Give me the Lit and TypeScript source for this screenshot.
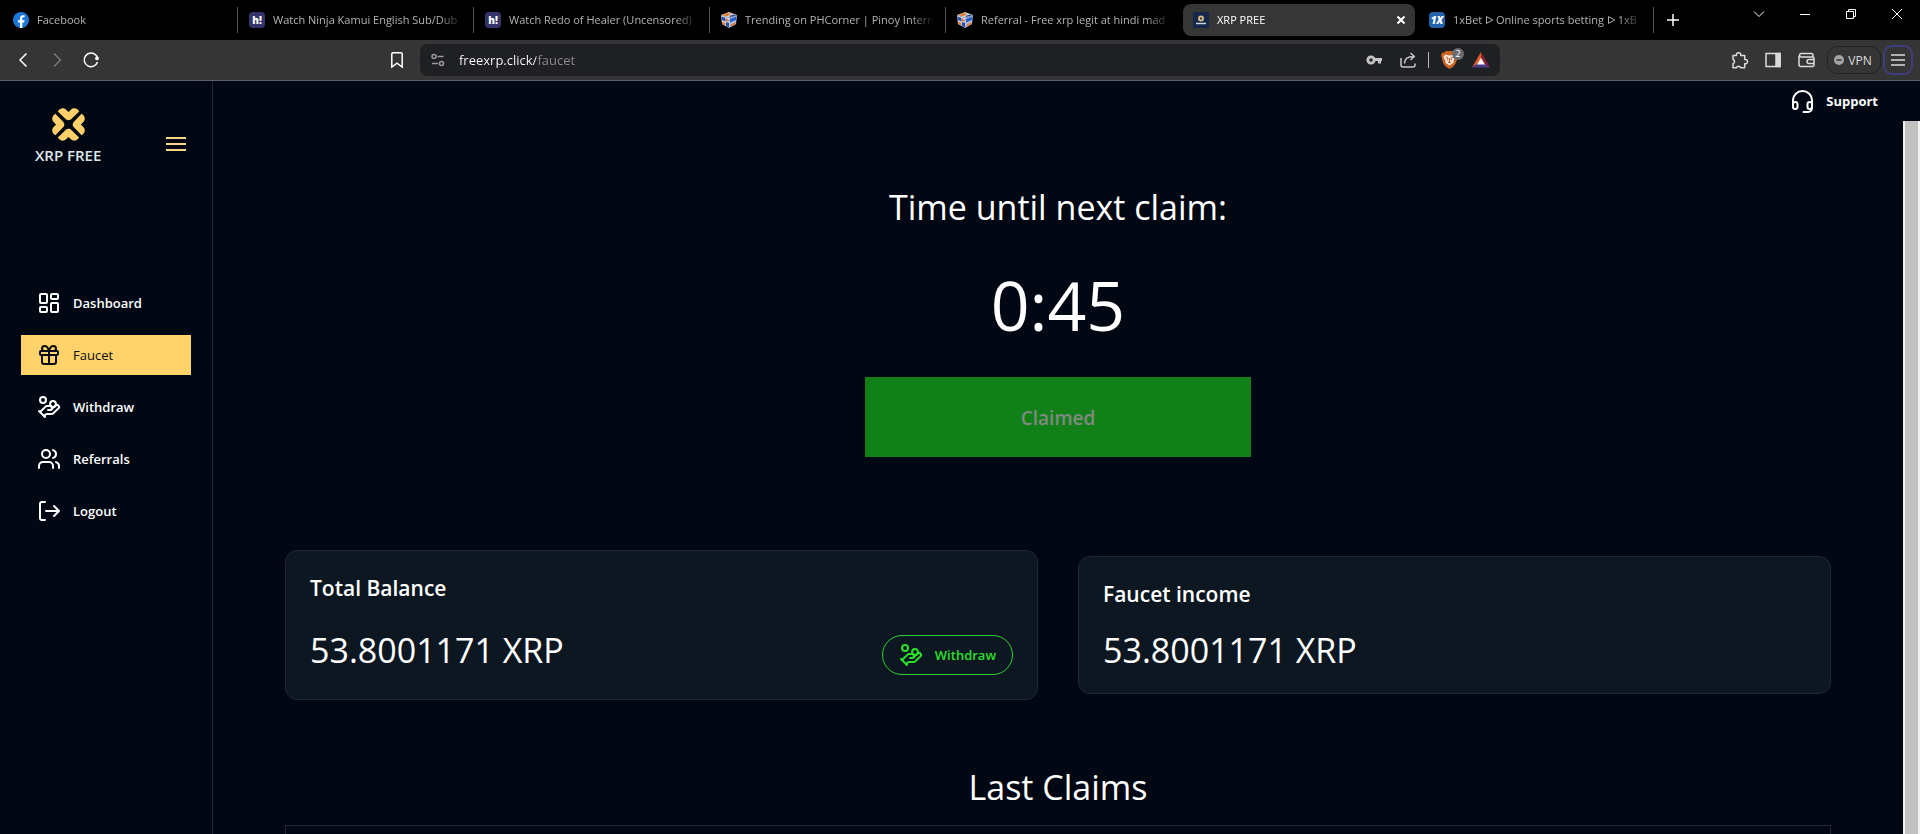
import { LitElement, html, css, svg, nothing, type TemplateResult } from "lit";
import { customElement, property } from "lit/decorators.js";
import { classMap } from "lit/directives/class-map.js";

const icons: Record<string, TemplateResult> = {
  dashboard: svg`<rect width="7" height="9" x="3" y="3" rx="1"/><rect width="7" height="5" x="14" y="3" rx="1"/><rect width="7" height="9" x="14" y="12" rx="1"/><rect width="7" height="5" x="3" y="16" rx="1"/>`,
  gift: svg`<rect x="3" y="8" width="18" height="4" rx="1"/><path d="M12 8v13M19 12v7a2 2 0 0 1-2 2H7a2 2 0 0 1-2-2v-7"/><path d="M7.5 8a2.5 2.5 0 0 1 0-5A4.8 8 0 0 1 12 8a4.8 8 0 0 1 4.5-5 2.5 2.5 0 0 1 0 5"/>`,
  coins: svg`<path d="M11 15h2a2 2 0 1 0 0-4h-3c-.6 0-1.1.2-1.4.6L3 17"/><path d="m7 21 1.6-1.4c.3-.4.8-.6 1.4-.6h4c1.1 0 2.1-.4 2.8-1.2l4.6-4.4a2 2 0 0 0-2.75-2.91l-4.2 3.9"/><path d="m2 16 6 6"/><circle cx="16" cy="9" r="2.9"/><circle cx="6" cy="5" r="3"/>`,
  users: svg`<path d="M16 21v-2a4 4 0 0 0-4-4H6a4 4 0 0 0-4 4v2"/><circle cx="9" cy="7" r="4"/><path d="M22 21v-2a4 4 0 0 0-3-3.87M16 3.13a4 4 0 0 1 0 7.75"/>`,
  logout: svg`<path d="M8 3H5a2 2 0 0 0-2 2v14a2 2 0 0 0 2 2h3M17 17l5-5-5-5M22 12H9"/>`,
  headset: svg`<path d="M3 17v-6a9 8.5 0 0 1 19 0v6"/><rect x="3" y="13" width="4.5" height="7" rx="2.2"/><rect x="17.500" y="13" width="4.500" height="7" rx="2.2"/><path d="M22 17v2a4 4 0 0 1-4 4h-4.500"/>`,
};

@customElement("line-icon")
class LineIcon extends LitElement {
  @property() name = "";
  static styles = css`
    :host { display: inline-flex; flex: none; }
    svg { width: 24px; height: 24px; overflow: visible; fill: none; stroke: currentColor; stroke-width: 2; stroke-linecap: round; stroke-linejoin: round; }
  `;
  render() {
    return html`<svg viewBox="0 0 24 24" aria-hidden="true">${icons[this.name]}</svg>`;
  }
}

const cube = html`<svg class="fav" viewBox="0 0 16 16" aria-hidden="true">
  <path d="M0 3 8 0l8 3-8 3z" fill="#d8d2cc"/><path d="M0 3l8 3v10l-7-4z" fill="#cfd6e6"/><path d="M16 3 8 6v10l7-4z" fill="#a9bfe8"/>
  <path d="M1.500 3.200 6 1l4 .8-4 2.400z" fill="#e07a2c"/><path d="M8 4l5-1.500 2 .8-5 1.800z" fill="#274a9a"/>
  <path d="M.5 4.500l4 1.500v3.500L1 8zM5 10l3 1v4.500l-3-1.500z" fill="#2a4fa8"/><path d="M4.500 6.500l3 1v2.500L5 9zM1.200 9.500l3 1.500v2.500l-3-1.500z" fill="#e2762a"/>
  <path d="M9 7l6-2.500v3.500l-6 2.500z" fill="#2860c8"/><path d="M9.500 12.500l5-2.500v2l-5 2.500z" fill="#e57d35"/></svg>`;
const facebook = html`<svg class="fav" viewBox="0 0 16 16" aria-hidden="true"><circle cx="8" cy="8" r="8" fill="#1b78d6"/><path d="M7 16v-5.500H5V8.200h2V6.500C7 4.300 8.200 3.200 10 3.200l1.600.1v2h-1c-1 0-1.300.5-1.300 1.200v1.700h2.200l-.4 2.300H9.300V16z" fill="#fff"/></svg>`;
const hi = html`<span class="fav badge violet" aria-hidden="true">h!</span>`;
const xbet = html`<span class="fav badge blue" aria-hidden="true">1X</span>`;
const xrp = html`<svg class="fav" viewBox="0 0 16 16" aria-hidden="true"><path d="M0 0h16v16H0z" fill="#14294a"/><circle cx="8" cy="6.500" r="3" fill="#d9b884"/><circle cx="8" cy="6.500" r="1.100" fill="#14294a"/><path d="M3 11.500h10" stroke="#cfd3da" stroke-width="1.500"/></svg>`;

const tabs = [
  { title: "Facebook", icon: facebook },
  { title: "Watch Ninja Kamui English Sub/Dub", icon: hi },
  { title: "Watch Redo of Healer (Uncensored)", icon: hi },
  { title: "Trending on PHCorner | Pinoy Intern", icon: cube },
  { title: "Referral - Free xrp legit at hindi mad", icon: cube, last: true },
  { title: "XRP PREE", icon: xrp, active: true },
  { title: "1xBet ᐅ Online sports betting ᐅ 1xB", icon: xbet },
];

@customElement("browser-chrome")
class BrowserChrome extends LitElement {
  static styles = css`
    :host { display: block; color: #fff; }
    * { box-sizing: border-box; }
    button, input { font: inherit; color: inherit; background: none; border: 0; padding: 0; margin: 0; }
    button { display: flex; align-items: center; justify-content: center; }
    svg { display: block; flex: none; overflow: visible; fill: none; stroke: currentColor; stroke-width: 1.5; }
    svg.solid { stroke: none; }
    .strip { display: flex; height: 40px; background: #000; padding-left: 2px; }
    .tabs { display: flex; flex: 0 1 1652px; min-width: 0; }
    .tab { flex: 1 1 0; min-width: 0; padding: 4px 2px 4px 1px; border-right: 1px solid transparent; border-image: linear-gradient(transparent 8px, #555 8px, #555 32px, transparent 32px) 1; color: #b3b3b3; font-size: 11px; line-height: 16px; }
    .tab.plain { border-image: none; }
    .face { display: flex; flex: 1; min-width: 0; height: 32px; align-items: center; gap: 8px; padding: 0 8px 0 10px; border-radius: 8px; }
    .tab.active .face { background: #363636; color: #fff; }
    .fav { width: 16px; height: 16px; flex: none; stroke: none; }
    .badge { border-radius: 4px; color: #fff; font-size: 10px; line-height: 16px; font-weight: 800; text-align: center; }
    .violet { background: #34346a; }
    .blue { background: #2462ac; font-style: italic; }
    .title { flex: 1; min-width: 0; overflow: hidden; white-space: nowrap; text-align: left; mask-image: linear-gradient(90deg, #000 calc(100% - 24px), transparent); }
    .plus { width: 38px; }
    .controls { display: flex; margin-left: auto; height: 28px; }
    .controls button { width: 46px; }
    .controls svg { stroke-width: 1; }
    .bar { display: grid; grid-template-columns: minmax(0, 1fr) minmax(0, 1080px) minmax(0, 1fr); height: 41px; padding: 4px 0; background: #353535; border-bottom: 1px solid #5d636e; }
    .side { display: flex; align-items: center; }
    .left { padding: 0 15px; gap: 18px; }
    .left button { width: 16px; height: 24px; }
    .left .mark { margin-left: auto; }
    .dim { color: #7c7c7c; }
    .url { display: flex; align-items: center; gap: 14px; background: #1f2023; border-radius: 8px; padding: 0 10px; color: #c4c4c4; }
    .url input { flex: 1; min-width: 0; height: 24px; outline: 0; font-size: 13px; color: transparent; background: linear-gradient(90deg, #fff 77px, #8d8d8d 77px); background-clip: text; }
    .url button { height: 24px; }
    .rule { width: 1px; height: 16px; margin: 0 -2px; background: #b5b5b5; }
    .shield { position: relative; }
    .count { position: absolute; left: 11px; top: 0; width: 12px; height: 12px; border-radius: 50%; background: #6a6c70; color: #fff; font-size: 9px; line-height: 12px; text-align: center; }
    .right { justify-content: flex-end; padding-right: 7px; gap: 17px; color: #dcdcdc; }
    .pair { display: flex; gap: 2px; margin-left: -5px; align-items: center; }
    .vpn { width: 54px; height: 28px; border: 1px solid #222; border-radius: 10px; font-size: 12px; gap: 4px; padding-right: 2px; }
    .menu { width: 30px; height: 30px; border: 2px solid #3f3d7c; border-radius: 9px; }
  `;
  render() {
    return html`
      <div class="strip">
        <div class="tabs" role="tablist">
          ${tabs.map((t) => html`<button role="tab" aria-selected=${t.active ? "true" : "false"} class=${classMap({ tab: true, active: !!t.active, plain: !!(t.active || t.last) })}>
            <span class="face">${t.icon}<span class="title">${t.title}</span>
            ${t.active ? html`<svg width="12" height="12" viewBox="0 0 12 12"><path d="M2.500 2.500l7 7M9.500 2.500l-7 7" stroke-width="2"/></svg>` : nothing}</span></button>`)}
        </div>
        <button class="plus" aria-label="New tab"><svg width="12" height="12" viewBox="0 0 12 12"><path d="M6 0v12M0 6h12"/></svg></button>
        <div class="controls">
          <button aria-label="Search tabs"><svg width="10" height="6" viewBox="0 0 10 6"><path d="M0 .5l5 5 5-5"/></svg></button>
          <button aria-label="Minimize"><svg width="10" height="10" viewBox="0 0 10 10"><path d="M0 5.500h10"/></svg></button>
          <button aria-label="Restore"><svg width="10" height="10" viewBox="0 0 10 10"><path d="M.5 2.500h7v7h-7zM2.500 2.500v-2h7v7h-2"/></svg></button>
          <button aria-label="Close"><svg width="10" height="10" viewBox="0 0 10 10"><path d="M0 0l10 10M10 0L0 10"/></svg></button>
        </div>
      </div>
      <div class="bar">
        <div class="side left">
          <button aria-label="Back"><svg width="16" height="16" viewBox="0 0 16 16"><path d="M11.500 1.500L5 8l6.500 6.500"/></svg></button>
          <button aria-label="Forward" class="dim"><svg width="16" height="16" viewBox="0 0 16 16"><path d="M5 1.500L11.500 8 5 14.500"/></svg></button>
          <button aria-label="Reload"><svg width="16" height="16" viewBox="0 0 16 16"><path d="M14.500 10A6.800 6.800 0 1 1 13 3.200L14.500 5"/><circle cx="14" cy="6.300" r="1.900" fill="currentColor" stroke="none"/></svg></button>
          <button aria-label="Bookmark" class="mark"><svg width="16" height="16" viewBox="0 0 16 16"><path d="M4 .8h8a1.200 1.200 0 0 1 1.200 1.200v13L8 11.200 2.800 15V2A1.200 1.200 0 0 1 4 .8z"/></svg></button>
        </div>
        <div class="url">
          <button aria-label="Site information"><svg width="15" height="16" viewBox="0 0 15 16"><g stroke="#9a9a9a"><circle cx="4" cy="4.500" r="2"/><path d="M7.500 4.500h6M2 11.500h6"/><circle cx="11.500" cy="11.500" r="2"/></g></svg></button>
          <input aria-label="Address" value="freexrp.click/faucet" />
          <button aria-label="Passwords"><svg width="18" height="16" viewBox="0 0 18 16"><circle cx="3" cy="8" r="3.200" stroke-width="2.800"/><path d="M6.500 7.500H14M11.500 7.500v4" stroke-width="3"/></svg></button>
          <button aria-label="Share"><svg width="16" height="16" viewBox="0 0 16 16"><path d="M1 6v7a2 2 0 0 0 2 2h10a2 2 0 0 0 2-2v-1.500M4.500 11.500c0-5 3.500-7 9-7M10.500 1l3.800 3.500-3.800 3.500"/></svg></button>
          <span class="rule"></span>
          <button aria-label="Shields" class="shield"><svg class="solid" width="17" height="18" viewBox="0 0 17 18"><path d="M4.500 0h8l1.500 1.800 2-.2L17 4.500l-.6 1.500c-.6 4-1.800 7.500-4 9.500L8.500 18l-3.900-2.500c-2.200-2-3.400-5.500-4-9.500L0 4.500l1-2.900 2 .2z" fill="#cb6323"/><path d="M4 3.500l4.500 1 4.500-1 1.500 2.500-2 4 .3 1.700-4.300 2.800-4.300-2.800.3-1.700-2-4z" fill="#f3e3d8"/><path d="M5 6l2 1-.5 2M12 6l-2 1 .5 2M8.500 7v4M7 11.500h3" stroke="#cb6323" stroke-width="1" fill="none"/></svg><span class="count">2</span></button>
          <button aria-label="Rewards"><svg class="solid" width="18" height="16" viewBox="0 0 18 16"><path d="M9 0L0 15.500l9-5z" fill="#e0622a"/><path d="M9 0l9 15.500-9-5z" fill="#8c1f31"/><path d="M0 15.500h18L9 9z" fill="#4b3a8c"/><path d="M9 6l4 6.500H5z" fill="#fff"/></svg></button>
        </div>
        <div class="side right">
          <button aria-label="Extensions"><svg width="17" height="17" viewBox="0 0 17 17"><path d="M2 3.500h3.500a2.200 2.200 0 1 1 4.200 0h4V7.500a2.200 2.200 0 1 1 0 4.200v4H9.700a2.200 2.200 0 0 0-4.200 0H2v-4a2.200 2.200 0 0 0 0-4.200z" stroke-linejoin="round"/></svg></button>
          <button aria-label="Sidebar"><svg width="16" height="16" viewBox="0 0 16 16"><path d="M1 1.500h14v13H1z"/><path d="M11 1.500h4v13h-4z" fill="currentColor"/></svg></button>
          <button aria-label="Wallet"><svg width="17" height="16" viewBox="0 0 17 16"><path d="M15 5V3a1.500 1.500 0 0 0-1.500-1.500H3a1.800 1.800 0 0 0 0 3.500h11.500A1.500 1.500 0 0 1 16 6.500v6.500a1.500 1.500 0 0 1-1.500 1.500H3A2 2 0 0 1 1 12.500V3.500M16 7.500h-5a2 2 0 0 0 0 4h5"/></svg></button>
          <div class="pair">
            <button class="vpn"><svg width="10" height="10" viewBox="0 0 10 10"><circle cx="5" cy="5" r="5" fill="#a5a5a5" stroke="none"/><path d="M2.500 5h5" stroke="#353535"/></svg>VPN</button>
            <button class="menu" aria-label="Menu"><svg width="14" height="12" viewBox="0 0 14 12"><path d="M0 1h14M0 6h14M0 11h14"/></svg></button>
          </div>
        </div>
      </div>`;
  }
}

const links = [
  { label: "Dashboard", icon: "dashboard" },
  { label: "Faucet", icon: "gift", active: true },
  { label: "Withdraw", icon: "coins" },
  { label: "Referrals", icon: "users" },
  { label: "Logout", icon: "logout" },
];

@customElement("side-nav")
class SideNav extends LitElement {
  static styles = css`
    :host { display: block; box-sizing: border-box; width: 213px; flex: none; border-right: 1px solid #202833; padding: 24px 21px 0; }
    .head { display: flex; align-items: center; justify-content: space-between; padding: 0 5px 0 14px; height: 77px; }
    .brand { display: flex; flex-direction: column; align-items: center; align-self: flex-start; gap: 4px; padding-top: 3px; color: #dfe5ec; font-size: 15px; line-height: 20px; font-weight: 600; }
    .brand svg { width: 33px; height: 33px; fill: #ffd06a; }
    .burger { display: flex; flex-direction: column; gap: 4px; width: 20px; padding: 0; border: 0; background: none; }
    .burger span { height: 2px; background: #f5d78f; }
    nav { display: flex; flex-direction: column; gap: 12px; margin-top: 101px; }
    a { display: flex; align-items: center; gap: 12px; height: 40px; padding: 0 16px; color: #fff; font-size: 13px; font-weight: 600; text-decoration: none; }
    a.active { background: #ffd369; color: #0a0c12; font-weight: 500; }
  `;
  render() {
    return html`
      <div class="head">
        <div class="brand">
          <svg viewBox="0 0 34 34" aria-hidden="true">
            ${[0, 90, 180, 270].map((r) => svg`<path transform=${`rotate(${r} 17 17)`} d="M6 3.500C8 0 12-.8 14.500 1.700L17 4.200l2.500-2.500C22-.8 26 0 28 3.500L20.200 11.200C18.300 13.200 15.700 13.200 13.800 11.200z"/>`)}
          </svg>
          <span>XRP FREE</span>
        </div>
        <button class="burger" aria-label="Toggle menu"><span></span><span></span><span></span></button>
      </div>
      <nav>${links.map((l) => html`<a href="#" class=${classMap({ active: !!l.active })}><line-icon name=${l.icon}></line-icon>${l.label}</a>`)}</nav>`;
  }
}

@customElement("app-root")
class AppRoot extends LitElement {
  static styles = css`
    :host { display: flex; flex-direction: column; height: 100vh; overflow: hidden; background: #010713; color: #fff; font-family: "Open Sans", "Noto Sans", sans-serif; }
    * { box-sizing: border-box; }
    h1, h2, h3, p { margin: 0; font-weight: 400; }
    .app { display: flex; flex: 1; min-height: 0; }
    .page { display: flex; flex-direction: column; flex: 1; min-width: 0; }
    .top { display: flex; justify-content: flex-end; height: 40px; padding-right: 42px; flex: none; }
    .support { display: flex; align-items: center; gap: 12px; color: #fff; font-size: 13px; font-weight: 700; text-decoration: none; }
    .view { display: flex; flex: 1; min-height: 0; }
    main { flex: 1; min-width: 0; overflow: hidden; padding: 65px 72px 0; display: flex; flex-direction: column; align-items: stretch; }
    .track { width: 17px; flex: none; background: #f1f1f1; padding: 0 2px; }
    .thumb { height: 100%; background: #c1c1c1; }
    .claim { display: flex; flex-direction: column; align-items: center; }
    .big { padding-top: 2px; font-size: 34px; line-height: 38px; }
    .clock { font-size: 68px; line-height: 72px; margin: 43px 0 36px; }
    .claimed { width: 386px; max-width: 100%; height: 80px; border: 0; padding: 2px 0 0; background: #128018; color: #808a80; font: inherit; font-size: 19px; font-weight: 600; }
    .cards { display: grid; grid-template-columns: 1fr 1fr; gap: 40px; align-items: center; margin-top: 93px; }
    .card { background: #0d1721; border: 1px solid #1f2934; border-radius: 12px; padding: 24px; }
    .card h2 { padding-top: 2px; font-size: 21px; line-height: 22px; font-weight: 600; margin-bottom: 24px; }
    .row { display: flex; justify-content: space-between; align-items: center; }
    .pill { display: flex; align-items: center; gap: 12px; height: 40px; margin-top: 12px; padding: 0 16px; border: 1px solid #2fd22f; border-radius: 20px; background: none; color: #2be02b; font: inherit; font-size: 13px; font-weight: 600; }
    .last { text-align: center; margin: 66px 0 19px; }
    .history { width: 100%; flex: none; border: 1px solid #1f2934; border-collapse: collapse; }
    .history td { height: 56px; padding: 0; }
  `;
  render() {
    return html`
      <browser-chrome></browser-chrome>
      <div class="app">
        <side-nav></side-nav>
        <div class="page">
          <header class="top"><a class="support" href="#"><line-icon name="headset"></line-icon>Support</a></header>
          <div class="view">
            <main>
              <section class="claim">
                <h1 class="big">Time until next claim:</h1>
                <p class="clock">0:45</p>
                <button class="claimed" disabled>Claimed</button>
              </section>
              <section class="cards">
                <article class="card">
                  <h2>Total Balance</h2>
                  <div class="row"><p class="big">53.8001171 XRP</p><button class="pill"><line-icon name="coins"></line-icon>Withdraw</button></div>
                </article>
                <article class="card">
                  <h2>Faucet income</h2>
                  <div class="row"><p class="big">53.8001171 XRP</p></div>
                </article>
              </section>
              <h2 class="big last">Last Claims</h2>
              <table class="history"><tbody><tr><td></td></tr></tbody></table>
            </main>
            <div class="track" aria-hidden="true"><div class="thumb"></div></div>
          </div>
        </div>
      </div>`;
  }
}
